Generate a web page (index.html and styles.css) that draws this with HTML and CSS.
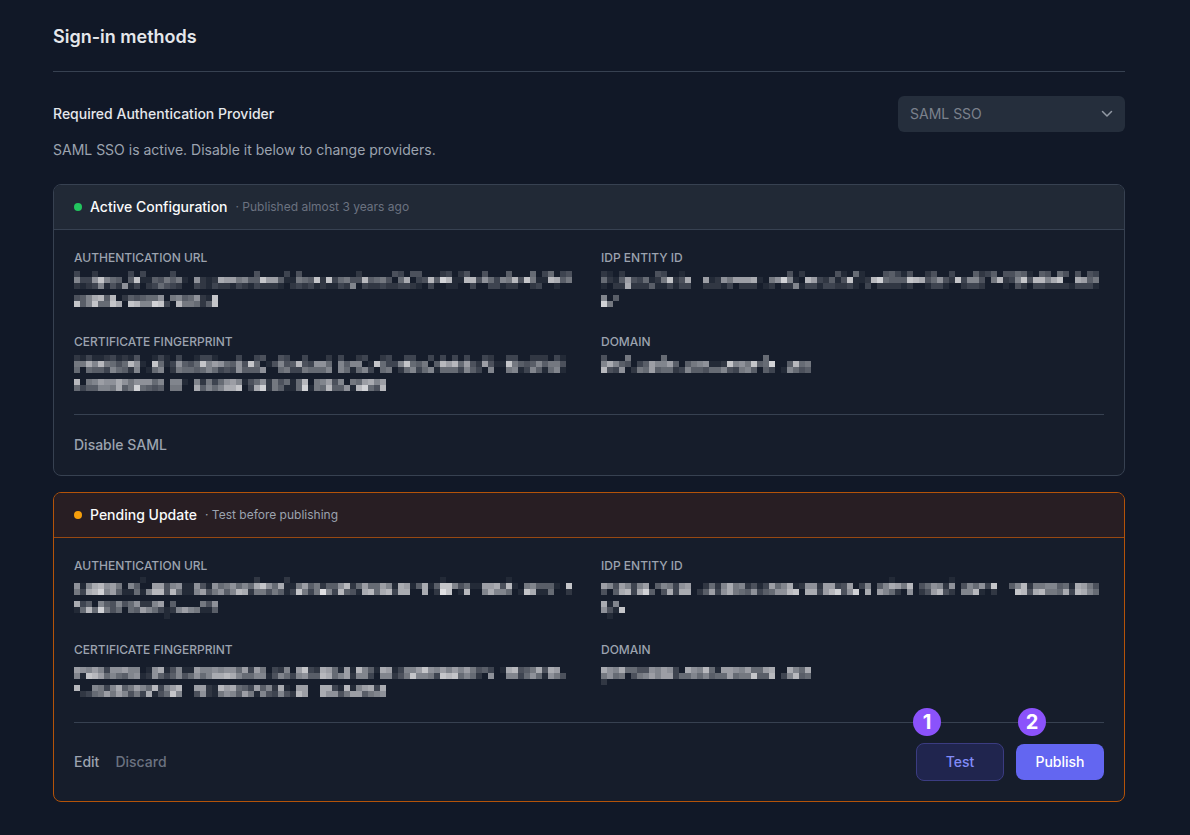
FILE: index.html
```html
<!DOCTYPE html>
<html lang="en">
<head>
<meta charset="utf-8">
<meta name="viewport" content="width=device-width, initial-scale=1">
<title>Sign-in methods</title>
<link rel="stylesheet" href="styles.css">
</head>
<body>
<main class="page">
  <header class="page-header">
    <h1 class="page-title">Sign-in methods</h1>
  </header>

  <section class="provider">
    <div class="provider-row">
      <label class="provider-label" for="provider">Required Authentication Provider</label>
      <div class="select">
        <select class="select-input" id="provider" disabled>
          <option>SAML SSO</option>
        </select>
        <svg class="select-chevron" viewBox="0 0 12 12" aria-hidden="true"><path d="M1.5 3.5 6 8l4.500-4.500"/></svg>
      </div>
    </div>
    <p class="provider-hint">SAML SSO is active. Disable it below to change providers.</p>
  </section>

  <section class="card card-active">
    <header class="card-header">
      <span class="dot"></span>
      <h2 class="card-title">Active Configuration</h2>
      <span class="card-note">· Published almost 3 years ago</span>
    </header>
    <div class="card-body">
      <dl class="fields">
        <div class="field"><dt class="field-label">AUTHENTICATION URL</dt><dd class="field-value" data-mask="activeUrl"></dd></div>
        <div class="field"><dt class="field-label">IDP ENTITY ID</dt><dd class="field-value" data-mask="activeEntity"></dd></div>
        <div class="field"><dt class="field-label">CERTIFICATE FINGERPRINT</dt><dd class="field-value" data-mask="activeCert"></dd></div>
        <div class="field"><dt class="field-label">DOMAIN</dt><dd class="field-value" data-mask="activeDomain"></dd></div>
      </dl>
      <footer class="card-footer">
        <button class="link-button" type="button">Disable SAML</button>
      </footer>
    </div>
  </section>

  <section class="card card-pending">
    <header class="card-header">
      <span class="dot"></span>
      <h2 class="card-title">Pending Update</h2>
      <span class="card-note">· Test before publishing</span>
    </header>
    <div class="card-body">
      <dl class="fields">
        <div class="field"><dt class="field-label">AUTHENTICATION URL</dt><dd class="field-value" data-mask="pendingUrl"></dd></div>
        <div class="field"><dt class="field-label">IDP ENTITY ID</dt><dd class="field-value" data-mask="pendingEntity"></dd></div>
        <div class="field"><dt class="field-label">CERTIFICATE FINGERPRINT</dt><dd class="field-value" data-mask="pendingCert"></dd></div>
        <div class="field"><dt class="field-label">DOMAIN</dt><dd class="field-value" data-mask="pendingDomain"></dd></div>
      </dl>
      <footer class="card-footer">
        <button class="link-button" type="button">Edit</button>
        <button class="link-button link-button-muted" type="button">Discard</button>
        <div class="actions">
          <div class="action">
            <button class="button button-test" type="button">Test</button>
            <span class="badge badge-test">1</span>
          </div>
          <div class="action">
            <button class="button button-publish" type="button">Publish</button>
            <span class="badge badge-publish">2</span>
          </div>
        </div>
      </footer>
    </div>
  </section>
</main>
<script src="masks.js"></script>
</body>
</html>
```

FILE: styles.css
```css
* {
  box-sizing: border-box;
}

body {
  margin: 0;
  background: #111827;
  color: #f3f4f6;
  font-family: Inter, "Liberation Sans", sans-serif;
  font-size: 14px;
  line-height: 20px;
}

h1,
h2,
p,
dl,
dd {
  margin: 0;
}

button,
select {
  font: inherit;
}

.page {
  padding: 25px 65px 33px 53px;
}

.page-header {
  padding-bottom: 22px;
  border-bottom: 1px solid #374151;
}

.page-title {
  color: #e5e7eb;
  font-size: 18px;
  font-weight: 600;
  line-height: 24px;
}

.provider {
  padding: 24px 0;
}

.provider-row {
  display: flex;
  align-items: center;
  justify-content: space-between;
}

.provider-label {
  color: #e5e7eb;
  font-weight: 500;
}

.provider-hint {
  margin-top: 8px;
  color: #9ca3af;
}

.select {
  position: relative;
  width: 227px;
}

.select-input {
  appearance: none;
  display: block;
  width: 100%;
  height: 36px;
  padding: 0 32px 0 12px;
  border: 0;
  border-radius: 6px;
  background: #252e3c;
  color: #7b818c;
  opacity: 1;
}

.select-chevron {
  position: absolute;
  top: 12px;
  right: 12px;
  width: 12px;
  height: 12px;
  fill: none;
  stroke: #9299a4;
  stroke-width: 1.5;
  stroke-linecap: round;
  stroke-linejoin: round;
  pointer-events: none;
}

.card {
  overflow: hidden;
  border: 1px solid #374151;
  border-radius: 8px;
  background: #161d2b;
}

.card + .card {
  margin-top: 16px;
}

.card-header {
  display: flex;
  align-items: center;
  gap: 8px;
  padding: 12px 20px;
  border-bottom: 1px solid #374151;
  background: #212936;
}

.card-title {
  color: #f9fafb;
  font-size: 14px;
  font-weight: 500;
}

.card-note {
  color: #6b7280;
  font-size: 12px;
}

.dot {
  width: 8px;
  height: 8px;
  border-radius: 50%;
  background: #22c55e;
}

.card-pending {
  border-color: #b45309;
}

.card-pending .card-header {
  border-color: #984912;
  background: #281e23;
}

.card-pending .dot {
  background: #f59e0b;
}

.card-pending .card-note {
  color: #9ca3af;
}

.card-body {
  padding: 20px;
}

.fields {
  display: grid;
  grid-template-columns: 1fr 1fr;
  gap: 24px;
}

.field {
  min-height: 60px;
}

.field-label {
  color: #9ca3af;
  font-size: 12px;
  font-weight: 500;
  line-height: 16px;
}

.field-value {
  margin-top: 5px;
}

.card-pending .field-value {
  margin-top: 3px;
}

.mask {
  display: block;
  overflow: visible;
}

.card-footer {
  display: flex;
  align-items: center;
  gap: 16px;
  margin-top: 20px;
  padding-top: 20px;
  border-top: 1px solid #374151;
}

.link-button {
  padding: 0;
  border: 0;
  background: none;
  color: #9ca3af;
  font-weight: 500;
}

.link-button-muted {
  color: #6b7280;
}

.actions {
  display: flex;
  gap: 12px;
  margin-left: auto;
}

.action {
  display: flex;
  align-items: center;
  position: relative;
}

.button {
  width: 88px;
  padding: 8px 0;
  border: 0;
  border-radius: 8px;
  font-weight: 500;
}

.button-test {
  border: 1px solid #3b3c81;
  background: #20254e;
  color: #818cf8;
}

.button-publish {
  background: #6366f1;
  color: #ffffff;
}

.badge {
  position: absolute;
  top: -35px;
  width: 28px;
  border-radius: 50%;
  background: #8b52fb;
  color: #ffffff;
  font-size: 20px;
  font-weight: 700;
  line-height: 28px;
  text-align: center;
}

.badge-test {
  left: -3px;
}

.badge-publish {
  left: 2px;
}
```

FILE: masks.js
```javascript
// Pixelated masks over private values. Each row is a list of "column:levels" runs,
// where every hex digit is the lightness of one square.
const CELL = 6;
const COLUMNS = 83;

const masks = {
  activeUrl: [
    "0:3 3:2 9:3 11:3 16:3 30:4 35:3 37:4 47:2 53:43 56:44 61:23 64:24 68:4 72:5 76:6 78:36 81:34",
    "0:8339d865.5d11547571.9212baa7855daa511765d2d36744c5674.6b.34c5ec11cc496387c4d711cb57",
    "0:21238142913.236432..321322132132221.23231211328.3223223321.3..11..3..33122..23..1",
    "",
    "0:458bc5c.2545669.7856921d",
    "0:d58d66db.dc88ed3.c77625d"
  ],
  activeEntity: [
    "0:21.2 9:43 13:1 31:4 33:2 39:41 42:61 47:4531 51:4 54:24 58:3 62:5235 67:44651 73:54 76:64 79:4 81:43",
    "0:6215a43612 10:7d24b..a1297aaab1.79e81.ca325 39:14d112ce6555dcb46942d38 62:84.7c238d4cc8bd..ba57",
    "0:1.22b222511313 14:3 17:22213.222.12.2281331332231.3.222212..1331..2332...1.42.332222 78:13331",
    "",
    "0:8.5",
    "0:e7"
  ],
  activeCert: [
    "0:2131123121 10:4 13:131.3..1331 27:3 30:34 34:43 38:3 42:2.3..23..23..33..3.3.3.3..32..33..222.31",
    "0:77b8c7646c91.d613954 20:6d8a96594d6.14845c43996.8588.1d6338d657 60:5cac6a42a411d754585774",
    "0:6.6553865 9:28.168.276656863439555 31:9..6733766 41:68.8616 48:83.67.26836816663853.8..78138516 80:81",
    "",
    "0:c.78a99b979996 14:8.881.827369a8146927461 37:6c.78a48.76ab8a",
    "0:635588 6:7b57e6545.77..b5868bbd.3be2751 36:16e176c559 46:1ce64c"
  ],
  activeDomain: [
    "0:4 4:7 10:6 27:6",
    "0:8b854.35a88a5.5789112d897d56e..5c67",
    "0:c439.276a566238554668437 24:85.53.18645"
  ],
  pendingUrl: [
    "11:1 30:2 35:2 61:1 72:1",
    "0:918bc9a7.85..aa4 16:89119419679686bd96b1 36:17a57255 44:9c26a66a81ba15b15dd846 66:11aab4c1.7855 79:51.d",
    "0:73bce8a51161 12:8cc4c6118a47958cb27747513d73 40:7f83c541bc6bc3bb..b.2fd.1c..8b886.1db116..2",
    "",
    "0:b35.854846922 13:8a.5....749",
    "0:16c6e746.65a 12:863128a87115",
    "15:1"
  ],
  pendingEntity: [
    "48:1 58:1",
    "0:a84a838a.58739a..262 20:8b7824 26:13a68b1299 36:2aa34a.38.58ba7c.46982 58:9.48693d..58c277885 77:61ba74",
    "0:4.5bc3be5.4b3bb.25a3 20:9b765935699cd.bb 36:3ace49e.b.a862.9.24ac42.88c1.2...dc4bc776b 78:3cb86",
    "",
    "0:b18",
    "0:941d",
    "1:1"
  ],
  pendingCert: [
    "",
    "0:a98a8399a88.19b1 16:4811a8898996a3a7 32:.328.ad32ba61a1c851ba1388ad98 61:a8a8a7453.1bc457b4ba",
    "0:81dca6865 9:8912953584696 22:8bbcb8668814863 37:8955cb68a2883.88247d8873dcd686 67:2.9..88369619 80:74",
    "",
    "0:c..8738b57a 11:86c38ac..aa21cab653a582b1.aa..bb31c18ab3b",
    "1:2367a7a8473 12:b146d8..49217985a7184384 36:2ca..b9947aa5789"
  ],
  pendingDomain: [
    "",
    "0:b98b664498a93.b98c61aa98a66ab..b86b",
    "0:7967.478a8aa3668685 19:66a677d55c.38c56",
    "0:2"
  ]
};

function shade(digit) {
  const level = parseInt(digit, 16) / 16;
  const mix = (from, to) => Math.round(from + (to - from) * level);
  return `rgb(${mix(22, 236)},${mix(29, 236)},${mix(43, 238)})`;
}

function drawMask(rows) {
  const ns = "http://www.w3.org/2000/svg";
  const svg = document.createElementNS(ns, "svg");
  svg.setAttribute("class", "mask");
  svg.setAttribute("width", COLUMNS * CELL);
  svg.setAttribute("height", 6 * CELL);
  svg.setAttribute("shape-rendering", "crispEdges");
  svg.setAttribute("aria-hidden", "true");
  rows.forEach((row, y) => {
    row.split(" ").filter(Boolean).forEach((run) => {
      const [start, levels] = run.split(":");
      [...levels].forEach((digit, i) => {
        if (digit === ".") return;
        const rect = document.createElementNS(ns, "rect");
        rect.setAttribute("x", (Number(start) + i) * CELL);
        rect.setAttribute("y", y * CELL);
        rect.setAttribute("width", CELL);
        rect.setAttribute("height", CELL);
        rect.setAttribute("fill", shade(digit));
        svg.append(rect);
      });
    });
  });
  return svg;
}

document.querySelectorAll("[data-mask]").forEach((slot) => {
  slot.append(drawMask(masks[slot.dataset.mask]));
});
```
